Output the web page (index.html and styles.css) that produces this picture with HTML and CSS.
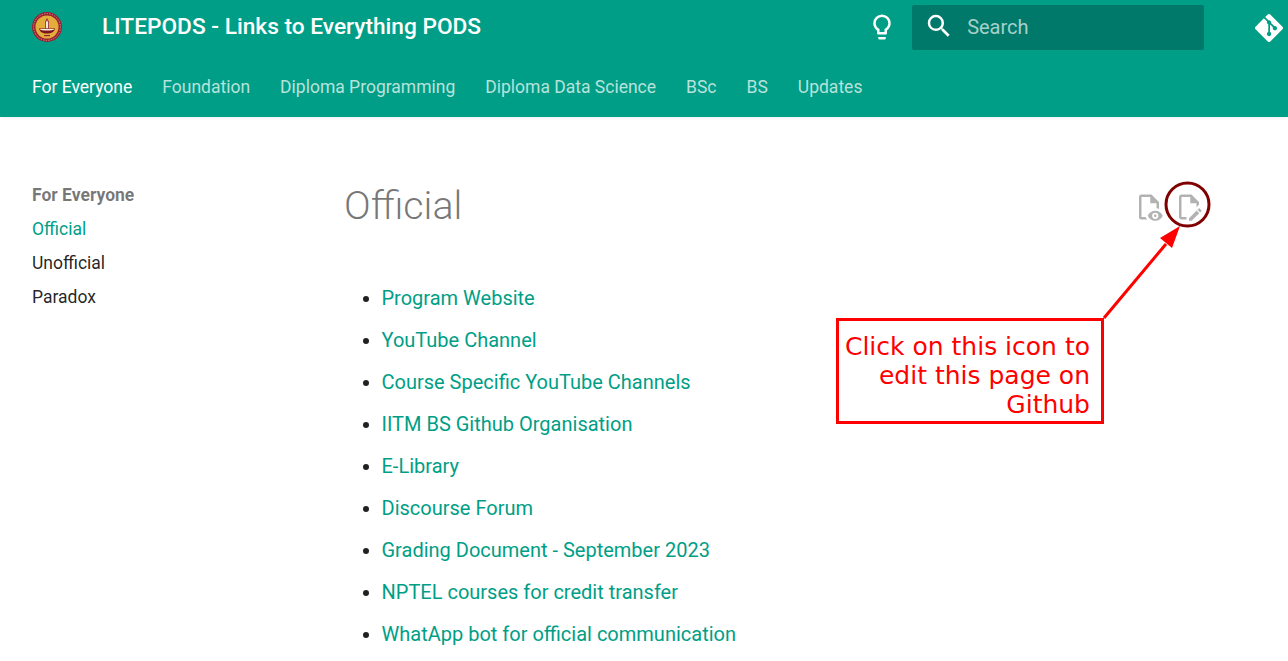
FILE: index.html
```html
<!DOCTYPE html>
<html lang="en">
<head>
<meta charset="utf-8">
<title>Official - LITEPODS</title>
<link rel="stylesheet" href="styles.css">
</head>
<body>
<header class="header">
  <div class="topbar">
    <svg class="logo" viewBox="0 0 32 32" aria-hidden="true">
      <circle cx="16" cy="16" r="15" fill="#9a1f30"/>
      <circle cx="16" cy="16" r="13.400" fill="none" stroke="#d9a9a0" stroke-width="0.8" stroke-dasharray="1.400 1.200"/>
      <circle cx="16" cy="16" r="11.500" fill="#e3ad3c"/>
      <path d="M14 17.500V11l2-4 2 4v6.500Z" fill="#8f1d2c"/>
      <path d="M14.800 17.500v-6l1.200-2.500 1.200 2.500v6Z" fill="#f3e6dc"/>
      <path d="M8 17.500h16c-.5 3-3.500 5-8 5s-7.500-2-8-5Z" fill="#7d1220"/>
      <path d="M8.500 18h15c-1 1-3.800 1.600-7.500 1.600s-6.500-.6-7.500-1.600Z" fill="#f6ecd8"/>
      <path d="M13 24h6v1.200h-6Z" fill="#9a1f30"/>
    </svg>
    <span class="site-title">LITEPODS - Links to Everything PODS</span>
    <svg class="bulb" viewBox="0 0 24 24" aria-hidden="true"><path d="M12 2a7 7 0 0 1 7 7c0 2.380-1.190 4.470-3 5.740V17a1 1 0 0 1-1 1H9a1 1 0 0 1-1-1v-2.260C6.190 13.470 5 11.380 5 9a7 7 0 0 1 7-7M9 21v-1h6v1a1 1 0 0 1-1 1h-4a1 1 0 0 1-1-1m3-17a5 5 0 0 0-5 5c0 2.050 1.230 3.810 3 4.580V16h4v-2.420c1.770-.77 3-2.530 3-4.580a5 5 0 0 0-5-5Z"/></svg>
    <div class="search">
      <svg class="search-icon" viewBox="0 0 24 24" aria-hidden="true"><path d="M9.500 3A6.500 6.500 0 0 1 16 9.500c0 1.610-.59 3.090-1.560 4.230l.27.27h.79l5 5-1.500 1.500-5-5v-.79l-.27-.27A6.516 6.516 0 0 1 9.500 16 6.500 6.500 0 0 1 3 9.500 6.500 6.500 0 0 1 9.500 3m0 2C7 5 5 7 5 9.500S7 14 9.500 14 14 12 14 9.500 12 5 9.500 5Z"/></svg>
      <span class="search-label">Search</span>
    </div>
    <svg class="git" viewBox="0 0 448 512" aria-hidden="true"><path d="M439.550 236.050 244 40.450a28.870 28.870 0 0 0-40.810 0l-40.660 40.630 51.520 51.520c27.060-9.140 52.680 16.770 43.390 43.680l49.660 49.660c34.230-11.800 61.180 31 35.470 56.690-26.490 26.490-70.210-2.870-56-37.340L240.220 199v121.850c25.300 12.540 22.260 41.850 9.080 55a34.340 34.340 0 0 1-48.550 0c-17.570-17.600-11.070-46.910 11.250-56v-123c-20.800-8.510-24.600-30.740-18.640-45L142.570 101 8.450 235.140a28.860 28.860 0 0 0 0 40.810l195.610 195.600a28.860 28.860 0 0 0 40.800 0l194.690-194.690a28.860 28.860 0 0 0 0-40.810z"/></svg>
  </div>
  <nav class="tabs">
    <a class="tab tab-active">For Everyone</a>
    <a class="tab">Foundation</a>
    <a class="tab">Diploma Programming</a>
    <a class="tab">Diploma Data Science</a>
    <a class="tab">BSc</a>
    <a class="tab">BS</a>
    <a class="tab">Updates</a>
  </nav>
</header>
<div class="main">
  <aside class="sidebar">
    <div class="side-title">For Everyone</div>
    <a class="side-link side-active">Official</a>
    <a class="side-link">Unofficial</a>
    <a class="side-link">Paradox</a>
  </aside>
  <article class="content">
    <div class="title-row">
      <h1 class="page-title">Official</h1>
      <div class="actions">
        <svg class="action" viewBox="0 0 24 24" aria-hidden="true"><path d="M17 18c.56 0 1 .44 1 1s-.44 1-1 1-1-.44-1-1 .44-1 1-1m0-3c-2.730 0-5.060 1.660-6 4 .94 2.340 3.270 4 6 4s5.060-1.660 6-4c-.94-2.340-3.270-4-6-4m0 6.500a2.500 2.500 0 0 1-2.500-2.500 2.500 2.500 0 0 1 2.500-2.500 2.500 2.500 0 0 1 2.500 2.500 2.500 2.500 0 0 1-2.500 2.500M9.270 20H6V4h7v5h5v4.070c.7.08 1.360.25 2 .49V8l-6-6H6a2 2 0 0 0-2 2v16a2 2 0 0 0 2 2h4.500a8.150 8.150 0 0 1-1.230-2Z"/></svg>
        <svg class="action" viewBox="0 0 24 24" aria-hidden="true"><path d="M10 20H6V4h7v5h5v3.100l2-2V8l-6-6H6c-1.100 0-2 .9-2 2v16c0 1.100.9 2 2 2h4v-2m10.200-7c.1 0 .3.1.4.2l1.300 1.300c.2.2.2.6 0 .8l-1 1-2.100-2.100 1-1c.1-.1.2-.2.4-.2m0 3.900L14.100 23H12v-2.100l6.100-6.100 2.100 2.100Z"/></svg>
      </div>
    </div>
    <ul class="links">
      <li><a>Program Website</a></li>
      <li><a>YouTube Channel</a></li>
      <li><a>Course Specific YouTube Channels</a></li>
      <li><a>IITM BS Github Organisation</a></li>
      <li><a>E-Library</a></li>
      <li><a>Discourse Forum</a></li>
      <li><a>Grading Document - September 2023</a></li>
      <li><a>NPTEL courses for credit transfer</a></li>
      <li><a>WhatApp bot for official communication</a></li>
    </ul>
  </article>
</div>
<svg class="overlay-art" viewBox="0 0 1288 661" aria-hidden="true">
  <circle cx="1187.500" cy="204.500" r="21.500" fill="none" stroke="#800000" stroke-width="3"/>
  <path d="M1104 318 1166 244" fill="none" stroke="#f00" stroke-width="3"/>
  <path d="M1180 226 1172 248 1160 238Z" fill="#f00"/>
</svg>
<div class="callout">Click on this icon to edit this page on Github</div>
</body>
</html>
```
FILE: styles.css
```css
* { box-sizing: border-box; }
html, body { margin: 0; height: 661px; overflow: hidden; background: #fff; }
body { font-family: Roboto, sans-serif; color: #000; position: relative; }

.header { background: #009e86; color: #fff; height: 117px; box-shadow: 0 0 4px rgba(0,0,0,.1); }
.topbar { display: flex; align-items: center; height: 56px; padding-left: 31px; padding-top: 0; }
.logo { width: 32px; height: 32px; flex: none; margin-top: -3px; }
.site-title { font-size: 22.700px; font-weight: 500; margin-left: 39px; margin-top: -3px; white-space: nowrap; }
.bulb { width: 30px; height: 30px; fill: #fff; margin-left: 386px; flex: none; margin-top: -2px; }
.search { width: 292px; height: 45px; background: #00796a; border-radius: 2px; margin-left: 15px; margin-top: -1px; display: flex; align-items: center; flex: none; }
.search-icon { width: 30px; height: 30px; fill: #fff; margin-left: 12px; flex: none; margin-top: -3px; }
.search-label { font-size: 20px; color: rgba(255,255,255,.66); margin-left: 13px; margin-top: -1px; }
.git { width: 28px; height: 32px; fill: #fff; margin-left: 51px; flex: none; margin-top: -1px; }

.tabs { display: flex; gap: 30px; padding-left: 32px; padding-top: 20px; font-size: 17.500px; line-height: 22px; }
.tab { color: rgba(255,255,255,.72); white-space: nowrap; }
.tab-active { color: #fff; }

.main { display: flex; padding-left: 32px; padding-top: 67px; }
.sidebar { width: 312px; flex: none; font-size: 17.500px; }
.side-title { font-weight: 700; color: rgba(0,0,0,.54); line-height: 22px; margin-bottom: 12px; }
.side-link { display: block; line-height: 22px; margin-bottom: 12px; color: rgba(0,0,0,.87); }
.side-active { color: #009e86; }

.content { width: 860px; flex: none; }
.title-row { display: flex; justify-content: space-between; align-items: flex-start; }
.page-title { margin: 0; font-size: 39.400px; font-weight: 300; line-height: 44px; color: rgba(0,0,0,.54); }
.actions { display: flex; gap: 10px; padding-top: 8px; }
.action { width: 30px; height: 30px; fill: rgba(0,0,0,.3); }

.links { margin: 57px 0 0; padding: 0 0 0 37.500px; font-size: 20px; line-height: 26px; color: rgba(0,0,0,.87); }
.links li { margin-bottom: 16px; white-space: nowrap; }
.links a { color: #009e86; }

.overlay-art { position: absolute; left: 0; top: 0; width: 1288px; height: 661px; pointer-events: none; }
.callout { position: absolute; left: 836px; top: 318px; width: 268px; height: 106px; border: 3px solid #f00; background: #fff; color: #f00; font-family: "DejaVu Sans", sans-serif; font-size: 25px; line-height: 29px; text-align: right; padding: 11px 11px 0 3px; }
```
